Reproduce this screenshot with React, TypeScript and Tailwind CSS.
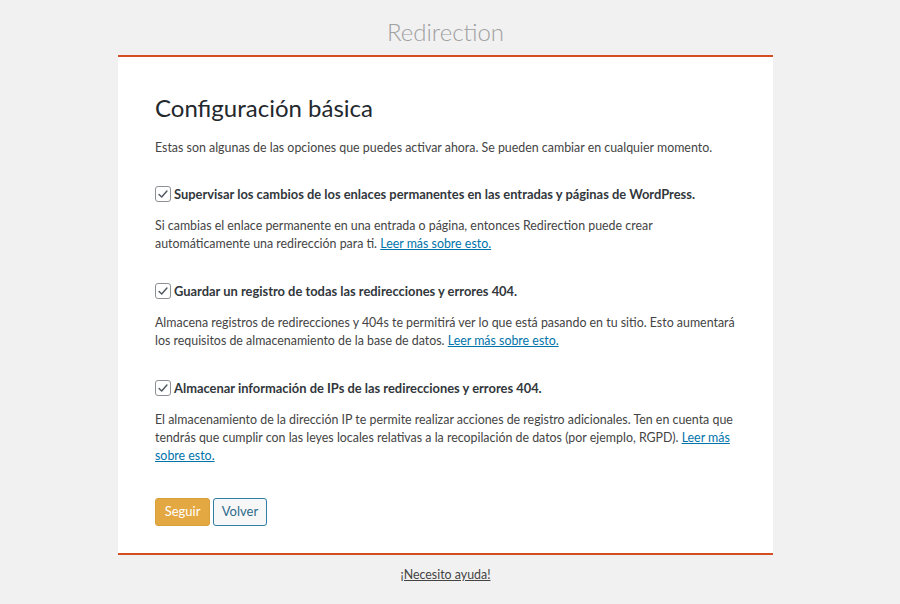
const Check = () => (
  <span className="w-4 h-4 shrink-0 rounded-[3px] border border-[#8c8f94] bg-white flex items-center justify-center">
    <svg viewBox="0 0 16 16" className="w-[14px] h-[14px]" fill="none" stroke="#50575e" strokeWidth="1.6" strokeLinecap="round" strokeLinejoin="round">
      <path d="M3.5 8.5l3 3 6-7" />
    </svg>
  </span>
);

const Link = ({ children }: { children: React.ReactNode }) => (
  <a href="#" className="text-[#0073aa] underline underline-offset-1">
    {children}
  </a>
);

const options = [
  {
    label: "Supervisar los cambios de los enlaces permanentes en las entradas y páginas de WordPress.",
    text: "Si cambias el enlace permanente en una entrada o página, entonces Redirection puede crear automáticamente una redirección para ti.",
  },
  {
    label: "Guardar un registro de todas las redirecciones y errores 404.",
    text: "Almacena registros de redirecciones y 404s te permitirá ver lo que está pasando en tu sitio. Esto aumentará los requisitos de almacenamiento de la base de datos.",
  },
  {
    label: "Almacenar información de IPs de las redirecciones y errores 404.",
    text: "El almacenamiento de la dirección IP te permite realizar acciones de registro adicionales. Ten en cuenta que tendrás que cumplir con las leyes locales relativas a la recopilación de datos (por ejemplo, RGPD).",
  },
];

export default function App() {
  return (
    <div className="min-h-[604px] w-[900px] pr-[9px] bg-[#f1f1f1] text-[#444] font-['Lato',sans-serif] text-[12.4px] flex flex-col items-center">
      <h1 className="pt-[16px] h-[55px] text-[24px] font-light text-[#a0a0a0] leading-[32px]">Redirection</h1>
      <div className="w-[655px] bg-white border-t-2 border-b-2 border-[#d54e21] px-[37px] pt-[36px] pb-[27px]">
        <h2 className="text-[24px] text-[#23282d] leading-[30px] mb-[16px]">Configuración básica</h2>
        <p className="leading-[18px] mb-[28px]">
          Estas son algunas de las opciones que puedes activar ahora. Se pueden cambiar en cualquier momento.
        </p>
        {options.map((o) => (
          <div key={o.label} className="mb-[29px]">
            <label className="flex items-center gap-[3px] text-[12.9px] font-bold text-[#32373c] leading-[18px] mb-[14px]">
              <Check />
              {o.label}
            </label>
            <p className="leading-[18px]">
              {o.text} <Link>Leer más sobre esto.</Link>
            </p>
          </div>
        ))}
        <div className="flex gap-[3px] pt-[4px]">
          <button className="h-[28px] w-[55px] rounded-[3px] bg-[#e4a842] border border-[#d99f3b] text-white text-[13px]">Seguir</button>
          <button className="h-[28px] w-[54px] rounded-[3px] bg-[#f7f7f7] border border-[#2e7ea6] text-[#2e6a8c] text-[13px]">Volver</button>
        </div>
      </div>
      <a href="#" className="mt-[11px] text-[#444] underline underline-offset-1">¡Necesito ayuda!</a>
    </div>
  );
}
